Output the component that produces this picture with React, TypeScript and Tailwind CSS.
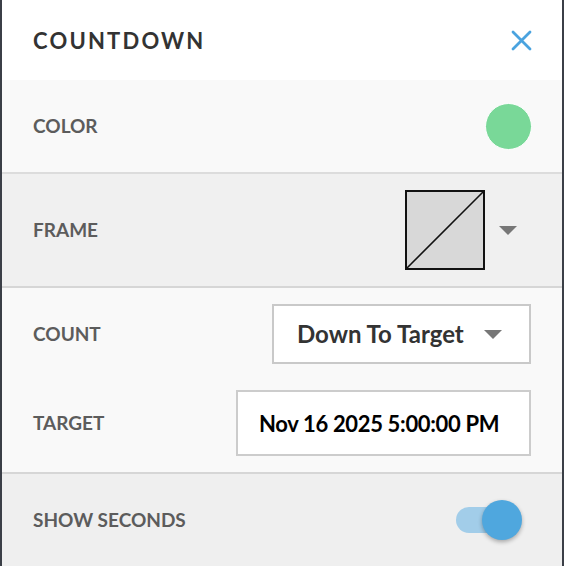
import React from 'react';

const font = { fontFamily: 'Lato, "Open Sans", sans-serif' };

const Label: React.FC<{ children: React.ReactNode }> = ({ children }) => (
  <span className="text-[19px] font-bold text-[#5c5c5c]">{children}</span>
);

const Caret: React.FC = () => (
  <svg width="18" height="9" viewBox="0 0 18 9">
    <polygon points="0,0 18,0 9,9" fill="#777777" />
  </svg>
);

export default function App() {
  return (
    <div style={font} className="w-[564px] h-[566px] border-x-2 border-[#3b3f47] bg-[#f0f0f0] flex flex-col overflow-hidden">
      {/* Header */}
      <div className="h-[80px] shrink-0 bg-white flex items-center justify-between pl-[31px] pr-[30px]">
        <h1 className="text-[22px] font-bold tracking-[0.1em] text-[#333333]">COUNTDOWN</h1>
        <svg width="21" height="21" viewBox="0 0 21 21">
          <path d="M2 2 L19 19 M19 2 L2 19" stroke="#4aa3df" strokeWidth="2.8" strokeLinecap="round" />
        </svg>
      </div>

      {/* Color */}
      <div className="h-[94px] shrink-0 bg-[#f9f9f9] border-b-2 border-[#dcdcdc] flex items-center justify-between pl-[31px] pr-[30px]">
        <Label>COLOR</Label>
        <div className="w-[47px] h-[47px] rounded-full bg-[#79d898] border border-white" />
      </div>

      {/* Frame */}
      <div className="h-[114px] shrink-0 bg-[#f0f0f0] border-b-2 border-[#d6d6d6] flex items-center justify-between pl-[31px] pr-[45px]">
        <Label>FRAME</Label>
        <div className="flex items-center gap-[14px]">
          <svg width="80" height="80" viewBox="0 0 80 80">
            <rect x="1" y="1" width="78" height="78" fill="#d8d8d8" stroke="#111111" strokeWidth="2" />
            <line x1="2" y1="78" x2="78" y2="2" stroke="#111111" strokeWidth="1.6" />
          </svg>
          <Caret />
        </div>
      </div>

      {/* Count / Target */}
      <div className="h-[186px] shrink-0 bg-[#f9f9f9] border-b-2 border-[#d6d6d6] flex flex-col pt-[16px] pl-[31px] pr-[31px] gap-[26px]">
        <div className="flex items-center justify-between">
          <Label>COUNT</Label>
          <div className="w-[259px] h-[60px] bg-white border-2 border-[#c9c9c9] flex items-center justify-between pl-[23px] pr-[27px]">
            <span className="text-[24px] font-bold text-[#333333]">Down To Target</span>
            <Caret />
          </div>
        </div>
        <div className="flex items-center justify-between">
          <Label>TARGET</Label>
          <div className="w-[295px] h-[66px] bg-white border-2 border-[#cccccc] flex items-center pl-[21px]">
            <span className="text-[22px] font-bold text-black tracking-[-0.015em]">Nov 16 2025 5:00:00 PM</span>
          </div>
        </div>
      </div>

      {/* Show seconds */}
      <div className="flex-1 bg-[#efefef] flex items-center justify-between pl-[31px] pr-[40px]">
        <Label>SHOW SECONDS</Label>
        <div className="relative w-[66px] h-[40px]">
          <div className="absolute left-0 top-[7px] w-[60px] h-[26px] rounded-full bg-[#a2cde9]" />
          <div className="absolute right-0 top-0 w-[40px] h-[40px] rounded-full bg-[#4fa7de] shadow-[0_2px_4px_rgba(0,0,0,0.3)]" />
        </div>
      </div>
    </div>
  );
}
